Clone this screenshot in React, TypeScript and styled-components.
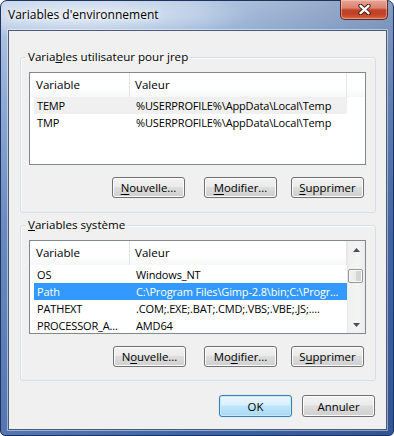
import styled, { createGlobalStyle } from "styled-components";

const GlobalStyle = createGlobalStyle`
  html, body {
    margin: 0;
    padding: 0;
    background: #ffffff;
  }
  body {
    font-family: "Open Sans", "Noto Sans", "Liberation Sans", sans-serif;
    font-size: 11.6px;
    color: #000;
  }
  * {
    box-sizing: border-box;
  }
`;

// fenêtre Aero
const Frame = styled.div`
  width: 394px;
  height: 436px;
  display: flex;
  flex-direction: column;
  padding: 0 6px 5px 7px;
  border: 1px solid #1d325c;
  border-radius: 7px 7px 5px 5px;
  background:
    radial-gradient(ellipse 170px 24px at 80px 14px, rgba(238, 244, 251, 0.85), rgba(238, 244, 251, 0) 100%),
    linear-gradient(to right, rgba(255, 255, 255, 0.12) 0%, rgba(255, 255, 255, 0) 50%, rgba(20, 45, 100, 0.28) 100%),
    linear-gradient(to bottom, #b6c9e3 0px, #a3bbdc 28px, #7f9ed0 100px, #5479b8 230px, #3d63a7 436px);
`;

const TitleBar = styled.div`
  height: 29px;
  flex: none;
  display: flex;
  align-items: flex-start;
  justify-content: space-between;
`;

const Title = styled.div`
  margin-top: 6px;
  line-height: 16px;
  font-size: 12px;
  text-shadow: 0 0 8px rgba(255, 255, 255, 0.95), 0 0 4px rgba(255, 255, 255, 0.8);
`;

const CloseButton = styled.div`
  width: 48px;
  height: 20px;
  margin: -1px -1px 0 0;
  display: flex;
  align-items: center;
  justify-content: center;
  border: 1px solid #5a2a22;
  border-top: none;
  border-radius: 0 0 5px 5px;
  background: linear-gradient(#e6a596 0%, #d9836f 42%, #c4432b 52%, #bf3f27 72%, #d76542 100%);
  box-shadow: inset 0 0 0 1px rgba(255, 220, 210, 0.45);
`;

// zone cliente
const Client = styled.div`
  flex: 1;
  display: flex;
  flex-direction: column;
  padding: 18px 10px 12px 11px;
  background: #f0f0f0;
  border: 1px solid #4a5b78;
  box-shadow: 0 0 0 1px rgba(255, 255, 255, 0.45);
`;

const Group = styled.fieldset<{ $top?: number; $bottom: number }>`
  margin: ${({ $top }) => $top || 0}px 0 0 0;
  padding: 7px 9px ${({ $bottom }) => $bottom}px 8px;
  border: 1px solid #d5dfe5;
  border-radius: 3px;
  box-shadow: inset 1px 1px 0 #fbfbfb;
  min-width: 0;
`;

const Legend = styled.legend`
  margin-left: -3px;
  padding: 0 2px;
  line-height: 16px;
`;

const ListView = styled.div<{ $h: number }>`
  height: ${({ $h }) => $h}px;
  border: 1px solid #828790;
  background: #fff;
  display: flex;
  overflow: hidden;
`;

const ListMain = styled.div`
  flex: 1;
  min-width: 0;
  display: flex;
  flex-direction: column;
`;

const Header = styled.div`
  height: 24px;
  flex: none;
  display: flex;
  background: linear-gradient(#ffffff 0%, #ffffff 55%, #f7f8f9 100%);
`;

const HeaderCell = styled.div<{ $w: number; $pl: number }>`
  width: ${({ $w }) => $w}px;
  padding-left: ${({ $pl }) => $pl}px;
  line-height: 24px;
  border-right: 1px solid #e5e5e5;
  white-space: nowrap;
`;

const Rows = styled.div<{ $pt?: number }>`
  padding-top: ${({ $pt }) => $pt || 0}px;
  font-size: 11px;
  letter-spacing: -0.15px;
`;

type RowState = "focus" | "idle" | "none";

const Row = styled.div<{ $state: RowState }>`
  display: flex;
  width: 313px;
  height: 17px;
  margin-left: 4px;
  line-height: 17px;
  background: ${({ $state }) =>
    $state === "focus" ? "#3399ff" : $state === "idle" ? "#f0f0f0" : "transparent"};
  color: ${({ $state }) => ($state === "focus" ? "#fff" : "#000")};
`;

const Cell = styled.div<{ $w: number; $pl: number }>`
  width: ${({ $w }) => $w}px;
  padding-left: ${({ $pl }) => $pl}px;
  white-space: nowrap;
  overflow: hidden;
  flex: none;
`;

// barre de défilement
const ScrollBar = styled.div`
  width: 18px;
  flex: none;
  display: flex;
  flex-direction: column;
  background: linear-gradient(to right, #e3e3e3 0px, #f0f0f0 1px, #f4f4f4 60%, #ececec 100%);
`;

const ArrowBtn = styled.div`
  height: 17px;
  flex: none;
  display: flex;
  align-items: center;
  justify-content: center;
`;

const Track = styled.div`
  flex: 1;
  padding-top: 11px;
`;

const Thumb = styled.div`
  width: 15px;
  height: 14px;
  margin-left: 1px;
  border: 1px solid #969696;
  border-radius: 2px;
  background: linear-gradient(to right, #f3f3f3 0%, #e9e9e9 50%, #d9d9d9 51%, #d0d0d0 100%);
  box-shadow: inset 0 0 0 1px #fafafa;
`;

const ButtonRow = styled.div<{ $top: number; $right: number }>`
  display: flex;
  justify-content: flex-end;
  margin-top: ${({ $top }) => $top}px;
  margin-right: ${({ $right }) => $right}px;
`;

const Button = styled.button<{ $ml?: number; $h?: number; $default?: boolean }>`
  width: 73px;
  height: ${({ $h }) => $h || 21}px;
  margin: 0 0 0 ${({ $ml }) => $ml || 0}px;
  padding: 0;
  font-family: inherit;
  font-size: 11.4px;
  color: #000;
  border-radius: 3px;
  border: 1px solid ${({ $default }) => ($default ? "#3c7fb1" : "#707070")};
  background: ${({ $default }) =>
    $default
      ? "linear-gradient(#eaf6fd 0%, #d9f0fc 45%, #bee6fd 50%, #a7d9f5 100%)"
      : "linear-gradient(#f2f2f2 0%, #ebebeb 45%, #dddddd 50%, #cfcfcf 100%)"};
  box-shadow: ${({ $default }) =>
    $default ? "inset 0 0 0 1px #c7e7fa, 0 0 1px #7fc3ea" : "inset 0 0 0 1px #fcfcfc"};

  u {
    text-decoration-thickness: 1px;
    text-underline-offset: 2px;
  }
`;

const ArrowUp = () => (
  <svg width="7" height="4" viewBox="0 0 7 4">
    <path d="M0 4 L3.5 0 L7 4 Z" fill="#4d4d4d" />
  </svg>
);

const ArrowDown = () => (
  <svg width="7" height="4" viewBox="0 0 7 4">
    <path d="M0 0 L3.5 4 L7 0 Z" fill="#4d4d4d" />
  </svg>
);

const CloseGlyph = () => (
  <svg width="13" height="11" viewBox="0 0 13 11">
    <path d="M2.5 1.8 L10.5 9.2 M10.5 1.8 L2.5 9.2" stroke="#3b1610" strokeWidth="4.2" strokeLinecap="round" />
    <path d="M2.5 1.8 L10.5 9.2 M10.5 1.8 L2.5 9.2" stroke="#ffffff" strokeWidth="2.4" strokeLinecap="round" />
  </svg>
);

type VarRow = { name: string; value: string; state: RowState };

const userVars: VarRow[] = [
  { name: "TEMP", value: "%USERPROFILE%\\AppData\\Local\\Temp", state: "idle" },
  { name: "TMP", value: "%USERPROFILE%\\AppData\\Local\\Temp", state: "none" },
];

const systemVars: VarRow[] = [
  { name: "OS", value: "Windows_NT", state: "none" },
  { name: "Path", value: "C:\\Program Files\\Gimp-2.8\\bin;C:\\Progr...", state: "focus" },
  { name: "PATHEXT", value: ".COM;.EXE;.BAT;.CMD;.VBS;.VBE;.JS;....", state: "none" },
  { name: "PROCESSOR_A...", value: "AMD64", state: "none" },
];

function VarList({ rows, height, scroll }: { rows: VarRow[]; height: number; scroll?: boolean }) {
  return (
    <ListView $h={height}>
      <ListMain>
        <Header>
          <HeaderCell $w={100} $pl={6}>Variable</HeaderCell>
          <HeaderCell $w={217} $pl={5}>Valeur</HeaderCell>
        </Header>
        <Rows $pt={scroll ? 1 : 0}>
          {rows.map((r) => (
            <Row key={r.name} $state={r.state}>
              <Cell $w={96} $pl={3}>{r.name}</Cell>
              <Cell $w={217} $pl={6}>{r.value}</Cell>
            </Row>
          ))}
        </Rows>
      </ListMain>
      {scroll && (
        <ScrollBar>
          <ArrowBtn>
            <ArrowUp />
          </ArrowBtn>
          <Track>
            <Thumb />
          </Track>
          <ArrowBtn>
            <ArrowDown />
          </ArrowBtn>
        </ScrollBar>
      )}
    </ListView>
  );
}

const App = () => {
  return (
    <>
      <GlobalStyle />
      <Frame>
        <TitleBar>
          <Title>Variables d'environnement</Title>
          <CloseButton>
            <CloseGlyph />
          </CloseButton>
        </TitleBar>
        <Client>
          {/* variables utilisateur */}
          <Group $bottom={14}>
            <Legend>
              Varia<u>b</u>les utilisateur pour jrep
            </Legend>
            <VarList rows={userVars} height={93} />
            <ButtonRow $top={12} $right={2}>
              <Button>
                <u>N</u>ouvelle...
              </Button>
              <Button $ml={19}>
                <u>M</u>odifier...
              </Button>
              <Button $ml={14}>
                <u>S</u>upprimer
              </Button>
            </ButtonRow>
          </Group>
          {/* variables système */}
          <Group $top={4} $bottom={13}>
            <Legend>
              <u>V</u>ariables système
            </Legend>
            <VarList rows={systemVars} height={94} scroll />
            <ButtonRow $top={12} $right={2}>
              <Button>
                N<u>o</u>uvelle...
              </Button>
              <Button $ml={18}>
                Mo<u>d</u>ifier...
              </Button>
              <Button $ml={14}>
                S<u>u</u>pprimer
              </Button>
            </ButtonRow>
          </Group>
          <ButtonRow $top={14} $right={1}>
            <Button $h={22} $default>
              OK
            </Button>
            <Button $h={22} $ml={10}>
              Annuler
            </Button>
          </ButtonRow>
        </Client>
      </Frame>
    </>
  );
};

export default App;
